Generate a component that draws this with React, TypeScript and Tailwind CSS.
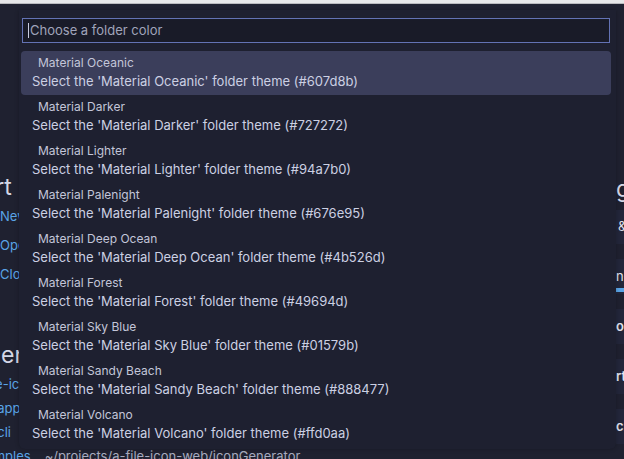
import React from 'react';

const themes = [
  { name: 'Material Oceanic', hex: '#607d8b' },
  { name: 'Material Darker', hex: '#727272' },
  { name: 'Material Lighter', hex: '#94a7b0' },
  { name: 'Material Palenight', hex: '#676e95' },
  { name: 'Material Deep Ocean', hex: '#4b526d' },
  { name: 'Material Forest', hex: '#49694d' },
  { name: 'Material Sky Blue', hex: '#01579b' },
  { name: 'Material Sandy Beach', hex: '#888477' },
  { name: 'Material Volcano', hex: '#ffd0aa' },
];

const font = { fontFamily: 'Inter, "Noto Sans", sans-serif' };

const Welcome = () => (
  <div className="flex h-[455px] w-full justify-between overflow-hidden bg-[#1f2130]">
    {/* left column of the welcome page, mostly hidden under the picker */}
    <div className="ml-[-40px] flex w-[200px] flex-col whitespace-nowrap pt-[168px]">
      <div className="h-[30px] text-[23px] leading-[30px] text-[#d4d7e6]">Start</div>
      <div className="mt-[4px] flex flex-col gap-[9px] pl-[40px] text-[13px] leading-[20px] text-[#5aa4e6]">
        <span>New File...</span>
        <span>Open...</span>
        <span>Clone Git Repository...</span>
      </div>
      <div className="mt-[56px] h-[30px] text-[23px] leading-[30px] text-[#d4d7e6]">Recent</div>
      <div className="mt-[4px] flex flex-col gap-[4px] pl-[24px] text-[13px] leading-[20px] text-[#5aa4e6]">
        <span>file-icon-web</span>
        <span>a-app</span>
        <span>a-cli</span>
        <span className="ml-[-12px] flex gap-[14px]">
          examples
          <span className="text-[#a7abbf]">~/projects/a-file-icon-web/iconGenerator</span>
        </span>
      </div>
    </div>
    {/* right column */}
    <div className="flex w-[8px] shrink-0 flex-col whitespace-nowrap pt-[170px]">
      <div className="h-[30px] text-[23px] leading-[30px] text-[#d4d7e6]">gs</div>
      <div className="mt-[6px] flex h-[34px] items-center bg-[#23263a] pl-[2px] text-[13px] text-[#e0e2ee]">&amp;</div>
      <div className="mt-[15px] flex h-[35px] flex-col justify-center bg-[#23263a] text-[13px] text-[#e0e2ee]">
        <span className="mt-[6px]">ne</span>
        <span className="mt-[2px] h-[4px] w-full bg-[#5aa4e6]" />
      </div>
      <div className="mt-[15px] flex h-[35px] items-center bg-[#23263a] text-[13px] font-semibold text-[#e0e2ee]">o</div>
      <div className="mt-[15px] flex h-[35px] items-center bg-[#23263a] text-[13px] font-semibold text-[#e0e2ee]">rt</div>
      <div className="mt-[15px] flex h-[35px] items-center bg-[#23263a] text-[13px] font-semibold text-[#e0e2ee]">ci</div>
    </div>
  </div>
);

const QuickPick = () => (
  <div className="absolute left-[19px] top-[10px] w-[597px] rounded-b-[6px] bg-[#1e2030] pb-[2px] pt-[8px] shadow-[0_0_4px_rgba(0,0,0,0.25)]">
    <div className="ml-[3px] mr-[6px] flex h-[25px] items-center border border-[#6372b4] bg-[#191b28] pl-[5px]">
      <span className="mr-[1px] h-[15px] w-[1px] bg-[#c9cce0]" />
      <span className="text-[13px] text-[#a0a4ba]">Choose a folder color</span>
    </div>
    <div className="mt-[8px] flex flex-col pl-[2px] pr-[5px]">
      {themes.map((t, i) => (
        <div
          key={t.name}
          className={`flex h-[44px] flex-col justify-center rounded-[4px] pl-[11px] ${
            i === 0 ? 'bg-[#3b3e5b]' : ''
          }`}
        >
          <span className="pl-[6px] text-[12px] leading-[16px] text-[#c3c6d9]">{t.name}</span>
          <span className="text-[13px] leading-[20px] text-[#ccd0e3]">
            Select the '{t.name}' folder theme ({t.hex})
          </span>
        </div>
      ))}
    </div>
  </div>
);

export default function App() {
  return (
    <div className="relative h-[459px] w-[624px] overflow-hidden bg-[#1f2130]" style={font}>
      <div className="h-[4px] border-b border-[#b9b9bd] bg-[#e6e6e8]" />
      <Welcome />
      <QuickPick />
    </div>
  );
}
